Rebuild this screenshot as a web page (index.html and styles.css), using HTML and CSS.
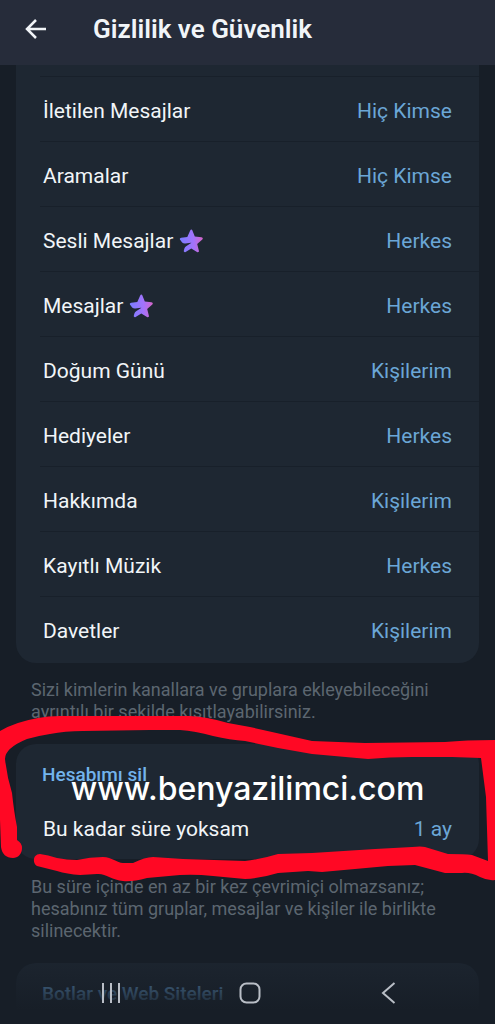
FILE: index.html
```html
<!DOCTYPE html>
<html lang="tr">
<head>
<meta charset="utf-8">
<meta name="viewport" content="width=device-width, initial-scale=1">
<title>Gizlilik ve Güvenlik</title>
<link rel="stylesheet" href="styles.css">
</head>
<body>
<svg class="defs" aria-hidden="true">
  <defs>
    <linearGradient id="premium" x1="0" y1="0" x2="1" y2="0">
      <stop offset="0" stop-color="#7a7dff"/>
      <stop offset="0.6" stop-color="#a273fb"/>
      <stop offset="1" stop-color="#d564c8"/>
    </linearGradient>
    <symbol id="star" viewBox="0 0 24 24">
      <path fill="url(#premium)" d="M11.200 1.400c.5-1.100 1.800-1.100 2.200 0l2.400 6.200 6.700.7c1.300.2 1.700 1.500.8 2.300l-5.100 4.300 1.700 6.800c.3 1.300-.8 2-1.900 1.400l-5.700-3.500-5.700 3.500c-1.100.6-2-.2-1.800-1.300l.6-2.300c.3-1 .8-1.600 1.700-2.200l5-3.200c.3-.3.200-.5-.2-.4l-5.600.7c-1.300.1-2.200-.2-3.200-1L1.500 11.200c-1.100-.9-.8-2.300.7-2.500l6.100-.8z"/>
    </symbol>
  </defs>
</svg>

<header class="topbar">
  <button class="back" aria-label="Geri">
    <svg width="24" height="24" viewBox="0 0 24 24" fill="none" stroke="currentColor" stroke-width="2.500"><path d="M22 12H3M12 3L3 12l9 9"/></svg>
  </button>
  <h1 class="title">Gizlilik ve Güvenlik</h1>
</header>

<main class="content">
  <ul class="card list">
    <li><button class="row"><span>İletilen Mesajlar</span><span class="value">Hiç Kimse</span></button></li>
    <li><button class="row"><span>Aramalar</span><span class="value">Hiç Kimse</span></button></li>
    <li><button class="row"><span class="label">Sesli Mesajlar<svg class="star"><use href="#star"/></svg></span><span class="value">Herkes</span></button></li>
    <li><button class="row"><span class="label">Mesajlar<svg class="star"><use href="#star"/></svg></span><span class="value">Herkes</span></button></li>
    <li><button class="row"><span>Doğum Günü</span><span class="value">Kişilerim</span></button></li>
    <li><button class="row"><span>Hediyeler</span><span class="value">Herkes</span></button></li>
    <li><button class="row"><span>Hakkımda</span><span class="value">Kişilerim</span></button></li>
    <li><button class="row"><span>Kayıtlı Müzik</span><span class="value">Herkes</span></button></li>
    <li><button class="row"><span>Davetler</span><span class="value">Kişilerim</span></button></li>
  </ul>
  <p class="hint">Sizi kimlerin kanallara ve gruplara ekleyebileceğini ayrıntılı bir şekilde kısıtlayabilirsiniz.</p>

  <section class="marked">
    <div class="card">
      <h2 class="heading">Hesabımı sil</h2>
      <button class="row compact"><span>Bu kadar süre yoksam</span><span class="value">1 ay</span></button>
    </div>
    <svg class="scribble" viewBox="0 0 495 174" preserveAspectRatio="none" aria-hidden="true">
      <path fill="#ff0824" fill-rule="evenodd" d="M0 21Q15 12 38 8Q48 6 60 6L190 6Q208 7 228 13L250 17L272 22L312 31Q338 32 365 33L445 32Q465 30 495 30V170Q488 171 480 167Q470 162 462 163L445 163Q430 159 415 155L388 156L355 159L322 162L308 161L278 163Q262 168 245 169L213 166Q195 164 180 165L147 168Q132 172 123 171C112 170 105 163 97 164L80 165Q67 164 57 161L37 156C32 153 33 144 40 144Q48 145 57 148Q67 150 77 150Q90 147 103 147C112 147 117 153 123 153H133Q145 147 153 147L183 149L245 151Q262 149 278 144L312 143L375 139L412 137Q421 136 425 137L448 144Q464 144 472 145L488 151L486 87L481 48L452 47H412Q390 47 368 49L312 44L278 38L245 31Q230 30 213 26Q195 21 180 20H150L83 21Q65 21 50 24Q37 26 27 29Q5 38 5 49Q7 67 12 83Q14 102 17 117V130Q22 133 22 138C22 144 18 148 13 148C6 148 2 144 1 137L0 110Z"/>
    </svg>
    <span class="watermark">www.benyazilimci.com</span>
  </section>
  <p class="hint">Bu süre içinde en az bir kez çevrimiçi olmazsanız; hesabınız tüm gruplar, mesajlar ve kişiler ile birlikte silinecektir.</p>

  <section class="card">
    <h2 class="heading">Botlar ve Web Siteleri</h2>
  </section>
</main>

<nav class="navbar">
  <button aria-label="Son uygulamalar"><svg width="24" height="24" viewBox="0 0 24 24" fill="none" stroke="currentColor" stroke-width="2"><path d="M4 2v20M12 2v20M20 2v20"/></svg></button>
  <button aria-label="Ana ekran"><svg width="24" height="24" viewBox="0 0 24 24" fill="none" stroke="currentColor" stroke-width="2"><rect x="2.500" y="2.500" width="19" height="19" rx="6"/></svg></button>
  <button aria-label="Geri git"><svg width="24" height="24" viewBox="0 0 24 24" fill="none" stroke="currentColor" stroke-width="2"><path d="M17.500 2L6 12l11.500 10"/></svg></button>
</nav>
</body>
</html>
```
FILE: styles.css
```css
* { box-sizing: border-box; }

body {
  margin: 0;
  height: 100vh;
  overflow: hidden;
  position: relative;
  display: flex;
  flex-direction: column;
  background: #171e27;
  color: #f1f5f8;
  font-family: Roboto, "Noto Sans", sans-serif;
  font-size: 21px;
}

button {
  margin: 0;
  padding: 0;
  border: 0;
  background: none;
  color: inherit;
  font: inherit;
}

.defs { position: absolute; width: 0; height: 0; }

.topbar {
  flex: none;
  display: flex;
  align-items: center;
  gap: 45px;
  padding: 14px 24px 21px;
  background: #262c3a;
}
.back { display: flex; }
.title {
  margin: 0;
  font-size: 26px;
  line-height: 30px;
  font-weight: 600;
}

.content { flex: 1; min-height: 0; overflow: hidden; }

.card {
  margin: 0 16px;
  border-radius: 20px;
  background: #1e2732;
}
.list {
  padding: 11px 0 2px;
  border-radius: 0 0 20px 20px;
  list-style: none;
}
.list li { padding-left: 24px; }
.list .row { border-top: 1px solid #18202a; padding-left: 3px; }

.row {
  display: flex;
  align-items: center;
  justify-content: space-between;
  width: 100%;
  height: 65px;
  padding: 3px 27px 0;
  text-align: left;
}
.compact { padding-top: 21px; }
.value { color: #6ba6d6; }
.label { display: flex; align-items: center; gap: 6px; }
.star { width: 24px; height: 24px; }

.hint {
  margin: 0;
  padding: 16px 48px 21px 31px;
  font-size: 18px;
  line-height: 22px;
  color: #5c6670;
}

.heading {
  margin: 0;
  padding: 20px 26px 0;
  font-size: 19px;
  line-height: 22px;
  font-weight: 500;
  color: #72b3ec;
}

.marked { position: relative; padding-bottom: 1px; }
.marked .card { padding-bottom: 8px; }
.scribble {
  position: absolute;
  left: 0;
  top: -34px;
  width: 100%;
  height: 174px;
}
.watermark {
  position: absolute;
  left: 0;
  right: 0;
  top: 24px;
  text-align: center;
  font-family: Inter, sans-serif;
  font-size: 32px;
  line-height: 42px;
  font-weight: 500;
  color: #fff;
}

.content > .card:last-child { height: 80px; }

.navbar {
  position: absolute;
  left: 0;
  right: 0;
  bottom: 0;
  display: flex;
  justify-content: center;
  gap: 115px;
  padding: 19px 0 19px 4px;
  background: linear-gradient(rgba(23, 30, 39, 0.3), rgba(23, 30, 39, 0.75) 50%, #171e27 78%);
  color: #b9bec6;
}
.navbar button { display: flex; }
```
